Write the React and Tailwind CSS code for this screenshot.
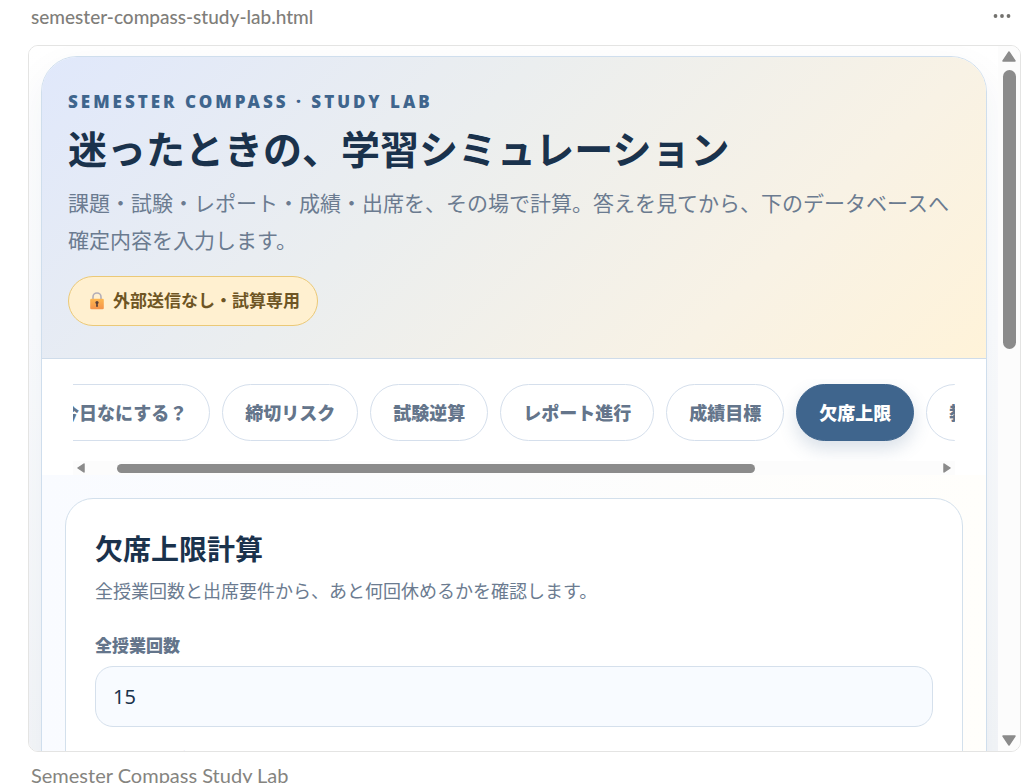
import React, { useState, useRef, useLayoutEffect } from 'react';

const tabs = [
  '今日なにする？',
  '締切リスク',
  '試験逆算',
  'レポート進行',
  '成績目標',
  '欠席上限',
  '教科バランス',
  '振り返り',
];

const LockIcon = () => (
  <svg width="16" height="18" viewBox="0 0 16 18" aria-hidden="true">
    <defs>
      <linearGradient id="lockBody" x1="0" y1="0" x2="0" y2="1">
        <stop offset="0" stopColor="#fdb750" />
        <stop offset="1" stopColor="#f4934a" />
      </linearGradient>
    </defs>
    <path d="M4 8V5a4 4 0 0 1 8 0v3" fill="none" stroke="#b3aeb8" strokeWidth="1.6" />
    <rect x="1.2" y="6.8" width="13.6" height="10.4" rx="1.3" fill="url(#lockBody)" />
    <circle cx="8" cy="10.6" r="1.6" fill="#5b4038" />
    <path d="M7.3 11h1.4l.3 3.8H7z" fill="#5b4038" />
  </svg>
);

const Triangle = ({ points, width, height }) => (
  <svg width={width} height={height} viewBox={`0 0 ${width} ${height}`} className="shrink-0" aria-hidden="true">
    <polygon points={points} fill="#8b8b8b" stroke="#8b8b8b" strokeWidth="1.5" strokeLinejoin="round" />
  </svg>
);

const TabBar = () => {
  const [active, setActive] = useState('欠席上限');
  const scroller = useRef(null);

  useLayoutEffect(() => {
    scroller.current.scrollLeft = 35;
  }, []);

  return (
    <nav className="bg-white pt-5 px-[31px]">
      <div ref={scroller} className="flex gap-3 overflow-x-auto pt-[5px] pb-5 [scrollbar-width:none]">
        {tabs.map((tab) => (
          <button
            key={tab}
            type="button"
            onClick={() => setActive(tab)}
            className={`shrink-0 h-[57px] px-[22px] rounded-full border text-lg font-extrabold whitespace-nowrap cursor-pointer ${
              active === tab
                ? 'bg-[#3f658d] border-[#3f658d] text-white shadow-[0_8px_18px_rgba(63,101,141,0.2)]'
                : 'bg-white border-[#d5dfec] text-[#64758b]'
            }`}
          >
            {tab}
          </button>
        ))}
      </div>
      <div className="flex items-center h-[14px] px-1 gap-1 bg-[#fcfcfc]" aria-hidden="true">
        <Triangle width={8} height={10} points="7,1 7,9 1,5" />
        <div className="flex-1 flex">
          <div className="w-[3.3%]"></div>
          <div className="w-[75%] h-[9px] rounded-full bg-[#8b8b8b]"></div>
        </div>
        <Triangle width={8} height={10} points="1,1 1,9 7,5" />
      </div>
    </nav>
  );
};

const Field = ({ id, label, value, onChange }) => (
  <div>
    <label htmlFor={id} className="block text-[17px] leading-6 font-extrabold text-[#64758b] mb-2">{label}</label>
    <input
      id={id}
      type="text"
      inputMode="numeric"
      value={value}
      onChange={(e) => onChange(e.target.value)}
      className="block w-full h-[61px] px-[17px] rounded-[18px] border border-[#d5e0ec] bg-[#f8fbff] text-xl text-[#1a324c] outline-none"
    />
  </div>
);

const AbsenceCalculator = () => {
  const [total, setTotal] = useState('15');
  const [absent, setAbsent] = useState('0');

  return (
    <section className="bg-white border border-[#d3e0ec] rounded-[28px] px-[29px] py-8">
      <h2 className="text-[28px] leading-9 font-bold text-[#1a324c]">欠席上限計算</h2>
      <p className="mt-2 mb-[27px] text-lg leading-8 text-[#6b7b90]">全授業回数と出席要件から、あと何回休めるかを確認します。</p>
      <div className="flex flex-col gap-[21px]">
        <Field id="total" label="全授業回数" value={total} onChange={setTotal} />
        <Field id="absent" label="これまでの欠席回数" value={absent} onChange={setAbsent} />
      </div>
    </section>
  );
};

const App = () => {
  return (
    <div className="h-screen flex flex-col overflow-hidden bg-white pl-7 pr-[3px]">
      <header className="shrink-0 h-[45px] flex justify-between pl-[3px] pr-[9px] font-['Lato_Medium','Lato',sans-serif]">
        <span className="text-[19px] leading-[33px] font-medium text-[#7f7e7a]">semester-compass-study-lab.html</span>
        <button type="button" aria-label="More" className="h-8 flex items-center cursor-pointer">
          <svg width="20" height="6" viewBox="0 0 20 6" fill="#73726e">
            <circle cx="3.5" cy="3" r="1.9" />
            <circle cx="10" cy="3" r="1.9" />
            <circle cx="16.5" cy="3" r="1.9" />
          </svg>
        </button>
      </header>

      <div className="flex-1 min-h-0 flex border border-[#e4e4e3] rounded-[10px] overflow-hidden font-['Noto_Sans','Noto_Sans_CJK_JP',sans-serif]">
        <div className="flex-1 min-w-0 overflow-hidden pl-3 pr-[11px] pt-[10px] bg-[linear-gradient(180deg,#ffffff,#fbfcfe_40%,#f4f6f9)]">
          <main className="border border-[#cfdeed] rounded-[36px] overflow-hidden bg-[linear-gradient(90deg,#f9fbff,#fffefb)] shadow-[0_16px_40px_rgba(30,50,80,0.06)]">
            <div className="px-[26px] pt-[33px] pb-8 border-b border-[#cfdcea] bg-[linear-gradient(135deg,#e0e8fb,#ebeeef_40%,#f8f2e5_75%,#fff3d9)]">
              <p className="text-[17px] leading-6 font-black tracking-[3px] text-[#3f658d]">SEMESTER COMPASS · STUDY LAB</p>
              <h1 className="mt-2 text-[39px] leading-[54px] font-bold text-[#1a324c]">迷ったときの、学習シミュレーション</h1>
              <p className="mt-[9px] text-[21px] leading-[37px] text-[#6b7b90]">
                課題・試験・レポート・成績・出席を、その場で計算。答えを見てから、下のデータベースへ確定内容を入力します。
              </p>
              <div className="mt-[17px] flex w-fit items-center gap-2 h-[50px] pl-5 pr-[17px] rounded-full border border-[#ebc977] bg-[#fff0d0] text-[17px] font-bold text-[#6e5524]">
                <LockIcon />
                <span>外部送信なし・試算専用</span>
              </div>
            </div>

            <TabBar />

            <div className="px-[23px] pt-[23px] pb-6">
              <AbsenceCalculator />
            </div>
          </main>
        </div>

        <div className="shrink-0 w-[22px] flex flex-col items-center bg-[#fcfcfc] py-[5px]" aria-hidden="true">
          <Triangle width={14} height={11} points="7,1 13,10 1,10" />
          <div className="flex-1 w-[13px] pt-2">
            <div className="h-[42%] rounded-full bg-[#8b8b8b]"></div>
          </div>
          <Triangle width={14} height={11} points="1,1 13,1 7,10" />
        </div>
      </div>

      <footer className="shrink-0 h-[31px] overflow-hidden pl-[3px] font-['Lato',sans-serif] text-[20px] leading-[46px] text-[#85847f]">
        Semester Compass Study Lab
      </footer>
    </div>
  );
};

export default App;
